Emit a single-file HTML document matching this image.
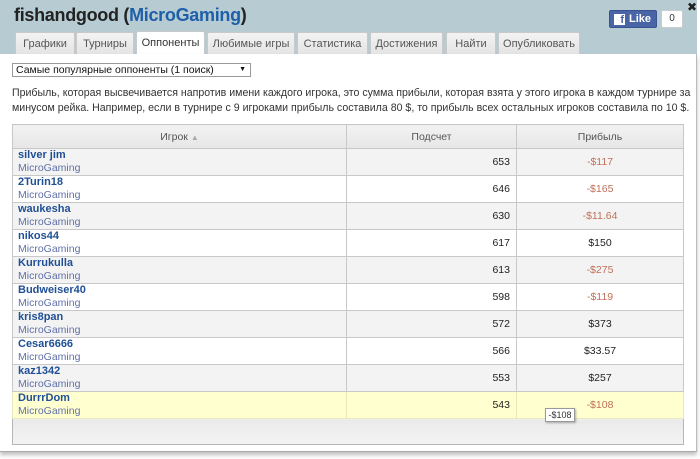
<!DOCTYPE html>
<html><head><meta charset="utf-8"><style>
*{margin:0;padding:0;box-sizing:border-box}
body{width:700px;height:459px;background:#fff;font-family:"Liberation Sans",sans-serif;overflow:hidden;position:relative}
#hdr{position:absolute;left:0;top:0;width:697px;height:54px;background:#b7cbd3}
#win{position:absolute;left:0;top:54px;width:697px;height:398px;background:#fff;border-right:1px solid #bbb;border-bottom:1px solid #aaa;box-shadow:0 3px 4px rgba(0,0,0,.25)}
h1{position:absolute;left:14px;top:5px;font-size:18px;font-weight:bold;color:#222;letter-spacing:-0.3px}
h1 span{color:#1f5fa8}
.tab{position:absolute;top:32px;height:22px;background:linear-gradient(#f3f3f3,#e4e4e4);border:1px solid #c9c9c9;border-bottom:none;font-size:11px;color:#555;text-align:center;line-height:22px;border-radius:2px 2px 0 0}
.tab.a{background:#fff;top:31px;height:24px;color:#333}
#fb{position:absolute;left:609px;top:10px;width:48px;height:18px;background:#4a65a5;border:1px solid #3b5290;border-radius:2px;color:#fff;font:bold 11px "Liberation Sans",sans-serif;line-height:17px}
#fb i{position:absolute;left:4px;top:3px;width:11px;height:11px;background:#fff;color:#4a65a5;font:bold 11px "Liberation Sans";font-style:normal;text-align:right;line-height:13px;padding-right:1px}
#fb b{position:absolute;left:19px}
#cnt{position:absolute;left:661px;top:10px;width:22px;height:18px;background:#fff;border:1px solid #ccc;font:10px "Liberation Sans";color:#333;text-align:center;line-height:16px;border-radius:2px}
#x{position:absolute;left:687px;top:0;font:bold 12px "DejaVu Sans";color:#222}
#sel{position:absolute;left:12px;top:63px;width:239px;height:14px;border:1px solid #999;font-size:10.5px;color:#111;line-height:12px;padding-left:3px}
#sel:after{content:"▼";position:absolute;right:4px;top:0;font-size:7px}
#txt{position:absolute;left:12px;top:86px;width:680px;font-size:10.6px;color:#333;line-height:15px}
table{position:absolute;left:12px;top:124px;width:672px;border-collapse:collapse;border:1px solid #b5b5b5;font-size:10.5px}
th{height:24px;background:linear-gradient(#f2f2f2,#e6e6e6);border:1px solid #c8c8c8;font-weight:normal;color:#555}
td{height:27px;border:1px solid #c8c8c8;vertical-align:middle}
td.n{padding-left:5px;line-height:13px}
td.n b{color:#1f4f96;font-size:11px;display:block}
td.n s{text-decoration:none;color:#6070a8;display:block}
td.c{text-align:right;padding-right:6px;color:#222}
td.p{text-align:center;color:#222}
td.p.r{color:#c0705a}
tr:nth-child(even) td{background:#f3f3f3}
tr.h td{background:#ffffd0!important;border-color:#e8e8c0}
tr.f td{height:26px;background:linear-gradient(#eaeaea,#f3f3f3)!important;border:none}
#tip{position:absolute;left:545px;top:408px;width:30px;height:14px;background:#fff;border:1px solid #999;font-size:9px;line-height:12px;text-align:center;box-shadow:1px 1px 2px rgba(0,0,0,.3);color:#333}
</style></head><body>
<div id="hdr">
<h1>fishandgood (<span>MicroGaming</span>)</h1>
<div class="tab" style="left:15px;width:60px">Графики</div>
<div class="tab" style="left:76px;width:58px">Турниры</div>
<div class="tab a" style="left:136px;width:69px">Оппоненты</div>
<div class="tab" style="left:207px;width:88px">Любимые игры</div>
<div class="tab" style="left:297px;width:71px">Статистика</div>
<div class="tab" style="left:370px;width:73px">Достижения</div>
<div class="tab" style="left:446px;width:50px">Найти</div>
<div class="tab" style="left:498px;width:82px">Опубликовать</div>
<div id="fb"><i>f</i><b>Like</b></div><div id="cnt">0</div>
</div>
<div id="x">✖</div>
<div id="win"></div>
<div id="sel">Самые популярные оппоненты (1 поиск)</div>
<div id="txt">Прибыль, которая высвечивается напротив имени каждого игрока, это сумма прибыли, которая взята у этого игрока в каждом турнире за<br>минусом рейка. Например, если в турнире с 9 игроками прибыль составила 80 $, то прибыль всех остальных игроков составила по 10 $.</div>
<table>
<tr><th style="width:334px">Игрок <span style="color:#aaa;font-size:8px">▲</span></th><th style="width:170px">Подсчет</th><th>Прибыль</th></tr>
<tr><td class="n"><b>silver jim</b><s>MicroGaming</s></td><td class="c">653</td><td class="p r">-$117</td></tr>
<tr><td class="n"><b>2Turin18</b><s>MicroGaming</s></td><td class="c">646</td><td class="p r">-$165</td></tr>
<tr><td class="n"><b>waukesha</b><s>MicroGaming</s></td><td class="c">630</td><td class="p r">-$11.64</td></tr>
<tr><td class="n"><b>nikos44</b><s>MicroGaming</s></td><td class="c">617</td><td class="p">$150</td></tr>
<tr><td class="n"><b>Kurrukulla</b><s>MicroGaming</s></td><td class="c">613</td><td class="p r">-$275</td></tr>
<tr><td class="n"><b>Budweiser40</b><s>MicroGaming</s></td><td class="c">598</td><td class="p r">-$119</td></tr>
<tr><td class="n"><b>kris8pan</b><s>MicroGaming</s></td><td class="c">572</td><td class="p">$373</td></tr>
<tr><td class="n"><b>Cesar6666</b><s>MicroGaming</s></td><td class="c">566</td><td class="p">$33.57</td></tr>
<tr><td class="n"><b>kaz1342</b><s>MicroGaming</s></td><td class="c">553</td><td class="p">$257</td></tr>
<tr class="h"><td class="n"><b>DurrrDom</b><s>MicroGaming</s></td><td class="c">543</td><td class="p r">-$108</td></tr>
<tr class="f"><td colspan="3"></td></tr>
</table>
<div id="tip">-$108</div>
</body></html>
